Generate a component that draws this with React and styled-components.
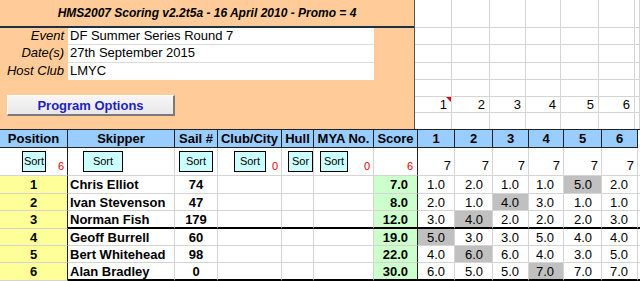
import React from "react";
import styled, { createGlobalStyle } from "styled-components";

const GlobalStyle = createGlobalStyle`
  body {
    margin: 0;
    background: #fff;
    font-family: "Liberation Sans", Arial, sans-serif;
    font-size: 13px;
    color: #000;
  }
`;

const COLS = "68px 107px 43px 64px 32px 60px 44px 37px 38px 36px 35px 38px 36px 1fr";
const GRID = "#d4d4d4";
const DARK = "#222";

const Sheet = styled.div`
  width: 640px;
  height: 281px;
  overflow: hidden;
`;

const Top = styled.div`
  display: flex;
  height: 129px;
`;

const Panel = styled.div`
  box-sizing: border-box;
  width: 418px;
  background: #ffcc99;
  border-right: 1px solid #555;
  display: flex;
  flex-direction: column;
`;

const TitleBar = styled.div`
  box-sizing: border-box;
  height: 28px;
  line-height: 26px;
  border-bottom: 2px solid #1e3040;
  text-align: center;
  font-size: 12px;
  font-weight: 700;
  font-style: italic;
`;

const Fields = styled.div`
  display: grid;
  grid-template-columns: 68px 306px;
  grid-template-rows: 17px 18px 17px;
`;

const Label = styled.div`
  font-style: italic;
  text-align: right;
  padding-right: 4px;
  line-height: 16px;
`;

const Value = styled.div`
  box-sizing: border-box;
  background: #fff;
  padding-left: 2px;
  line-height: 16px;
  border-bottom: ${(p) => (p.$last ? "none" : "1px solid #dcdcdc")};
`;

const OptionsButton = styled.div`
  box-sizing: border-box;
  margin: 15px 0 0 7px;
  width: 168px;
  height: 21px;
  background: linear-gradient(#f6f6f6, #e8e8e8);
  border-top: 1px solid #fff;
  border-left: 1px solid #fff;
  border-right: 2px solid #7a7a7a;
  border-bottom: 2px solid #7a7a7a;
  color: #1f1fc0;
  font-weight: 700;
  font-size: 13px;
  display: flex;
  align-items: center;
  justify-content: center;
`;

const TopGrid = styled.div`
  flex: 1;
  display: grid;
  grid-template-columns: 37px 38px 36px 35px 38px 36px 1fr;
  grid-template-rows: 28px 17px 18px 17px 17px 16px 16px;
`;

const GridCell = styled.div`
  box-sizing: border-box;
  position: relative;
  border-right: 1px solid ${GRID};
  border-bottom: ${(p) => (p.$last ? "none" : `1px solid ${GRID}`)};
  display: flex;
  align-items: flex-end;
  justify-content: flex-end;
  padding: 0 4px 0 0;
  line-height: 15px;
`;

const CommentMark = styled.span`
  position: absolute;
  top: 0;
  right: 0;
  width: 0;
  height: 0;
  border-top: 5px solid #e00000;
  border-left: 5px solid transparent;
`;

const Row = styled.div`
  box-sizing: border-box;
  display: grid;
  grid-template-columns: ${COLS};
  height: ${(p) => p.$h}px;
  border-top: ${(p) => (p.$ruled ? `1px solid ${DARK}` : "none")};
`;

const HeadCell = styled.div`
  box-sizing: border-box;
  background: ${(p) => (p.$blank ? "#fff" : "#99ccff")};
  border-right: ${(p) => (p.$blank ? "none" : `1px solid ${DARK}`)};
  border-bottom: ${(p) => (p.$blank ? "none" : `1px solid ${DARK}`)};
  font-weight: 700;
  font-size: 13px;
  display: flex;
  align-items: center;
  justify-content: center;
  white-space: nowrap;
  overflow: hidden;
`;

const SortCell = styled.div`
  box-sizing: border-box;
  display: flex;
  align-items: center;
  padding: 0 ${(p) => p.$padRight ?? 3}px 0 ${(p) => p.$padLeft ?? 0}px;
  border-right: 1px solid ${(p) => (p.$edge ? DARK : GRID)};
  border-bottom: 1px solid ${GRID};
  justify-content: ${(p) => (p.$right ? "flex-end" : "flex-start")};
`;

const SortButton = styled.div`
  box-sizing: border-box;
  width: ${(p) => p.$w}px;
  height: 21px;
  flex-shrink: 0;
  background: #ccffff;
  border: 1px solid #000;
  font-size: 11px;
  display: flex;
  justify-content: center;
  padding-top: 3px;
  overflow: hidden;
`;

const Count = styled.span`
  margin-left: auto;
  align-self: flex-end;
  padding-bottom: 3px;
  color: #e00000;
  font-size: 11px;
`;

const RaceCount = styled.span`
  align-self: flex-end;
  padding-bottom: 2px;
  font-size: 13px;
`;

const Cell = styled.div`
  box-sizing: border-box;
  display: flex;
  align-items: center;
  justify-content: ${(p) => p.$align || "center"};
  padding: 0 ${(p) => p.$padRight || 0}px 0 ${(p) => p.$padLeft || 0}px;
  background: ${(p) => p.$bg || "#fff"};
  font-weight: ${(p) => (p.$bold ? 700 : 400)};
  border-right: ${(p) => (p.$noEdge ? "none" : `1px solid ${p.$edge ? DARK : GRID}`)};
  border-bottom: ${(p) => (p.$thick ? "2px solid #000" : `1px solid ${GRID}`)};
  white-space: nowrap;
  overflow: hidden;
  line-height: 15px;
`;

const headers = ["Position", "Skipper", "Sail #", "Club/City", "Hull", "MYA No.", "Score", "1", "2", "3", "4", "5", "6"];

const sorters = [
  { padLeft: 22, w: 24, label: "Sort", count: "6", edge: true },
  { padLeft: 15, w: 40, label: "Sort" },
  { padLeft: 4, w: 34, label: "Sort" },
  { padLeft: 16, w: 32, label: "Sort", count: "0" },
  { padLeft: 6, w: 25, label: "Sor" },
  { padLeft: 6, w: 28, label: "Sort", count: "0" },
  { count: "6", edge: true },
];

const results = [
  { pos: 1, name: "Chris Elliot", sail: 74, score: 7, races: [1, 2, 1, 1, 5, 2], drop: 4 },
  { pos: 2, name: "Ivan Stevenson", sail: 47, score: 8, races: [2, 1, 4, 3, 1, 1], drop: 2 },
  { pos: 3, name: "Norman Fish", sail: 179, score: 12, races: [3, 4, 2, 2, 2, 3], drop: 1, thick: true },
  { pos: 4, name: "Geoff Burrell", sail: 60, score: 19, races: [5, 3, 3, 5, 4, 4], drop: 0 },
  { pos: 5, name: "Bert Whitehead", sail: 98, score: 22, races: [4, 6, 6, 4, 3, 5], drop: 1 },
  { pos: 6, name: "Alan Bradley", sail: 0, score: 30, races: [6, 5, 5, 7, 7, 7], drop: 3, thick: true },
];

const rowHeights = [18, 17, 18, 17, 17, 18];
const topRows = 7;

const App = () => {
  return (
    <Sheet>
      <GlobalStyle />
      <Top>
        <Panel>
          <TitleBar>HMS2007 Scoring v2.2t5a - 16 April 2010 - Promo = 4</TitleBar>
          <Fields>
            <Label>Event</Label>
            <Value>DF Summer Series Round 7</Value>
            <Label>Date(s)</Label>
            <Value>27th September 2015</Value>
            <Label>Host Club</Label>
            <Value $last>LMYC</Value>
          </Fields>
          <OptionsButton>Program Options</OptionsButton>
        </Panel>
        <TopGrid>
          {Array.from({ length: topRows * 7 }).map((_, i) => {
            const r = Math.floor(i / 7);
            const c = i % 7;
            const showNum = r === 5 && c < 6;
            return (
              <GridCell key={i} $last={r === topRows - 1}>
                {showNum && c === 0 && <CommentMark />}
                {showNum ? c + 1 : ""}
              </GridCell>
            );
          })}
        </TopGrid>
      </Top>

      <Row $h={19} $ruled>
        {headers.map((h) => (
          <HeadCell key={h}>{h}</HeadCell>
        ))}
        <HeadCell $blank />
      </Row>

      <Row $h={28}>
        {sorters.map((s, i) => (
          <SortCell key={i} $padLeft={s.padLeft} $padRight={i === 6 ? 4 : 3} $edge={s.edge}>
            {s.w && <SortButton $w={s.w}>{s.label}</SortButton>}
            {s.count && <Count>{s.count}</Count>}
          </SortCell>
        ))}
        {[0, 1, 2, 3, 4, 5].map((i) => (
          <SortCell key={`r${i}`} $right $padRight={3}>
            <RaceCount>7</RaceCount>
          </SortCell>
        ))}
        <SortCell />
      </Row>

      {results.map((r, i) => (
        <Row key={r.pos} $h={rowHeights[i]}>
          <Cell $bg="#ffff99" $bold $edge>{r.pos}</Cell>
          <Cell $bold $align="flex-start" $padLeft={2} $thick={r.thick}>{r.name}</Cell>
          <Cell $bold $thick={r.thick}>{r.sail}</Cell>
          <Cell $thick={r.thick} />
          <Cell $thick={r.thick} />
          <Cell $thick={r.thick} />
          <Cell $bg="#ccffcc" $bold $align="flex-end" $padRight={9} $edge $thick={r.thick}>
            {r.score.toFixed(1)}
          </Cell>
          {r.races.map((v, j) => (
            <Cell
              key={j}
              $align="flex-end"
              $padRight={9}
              $bg={j === r.drop ? "#c0c0c0" : "#fff"}
              $thick={r.thick}
            >
              {v.toFixed(1)}
            </Cell>
          ))}
          <Cell $noEdge $thick={r.thick} />
        </Row>
      ))}
    </Sheet>
  );
};

export default App;
